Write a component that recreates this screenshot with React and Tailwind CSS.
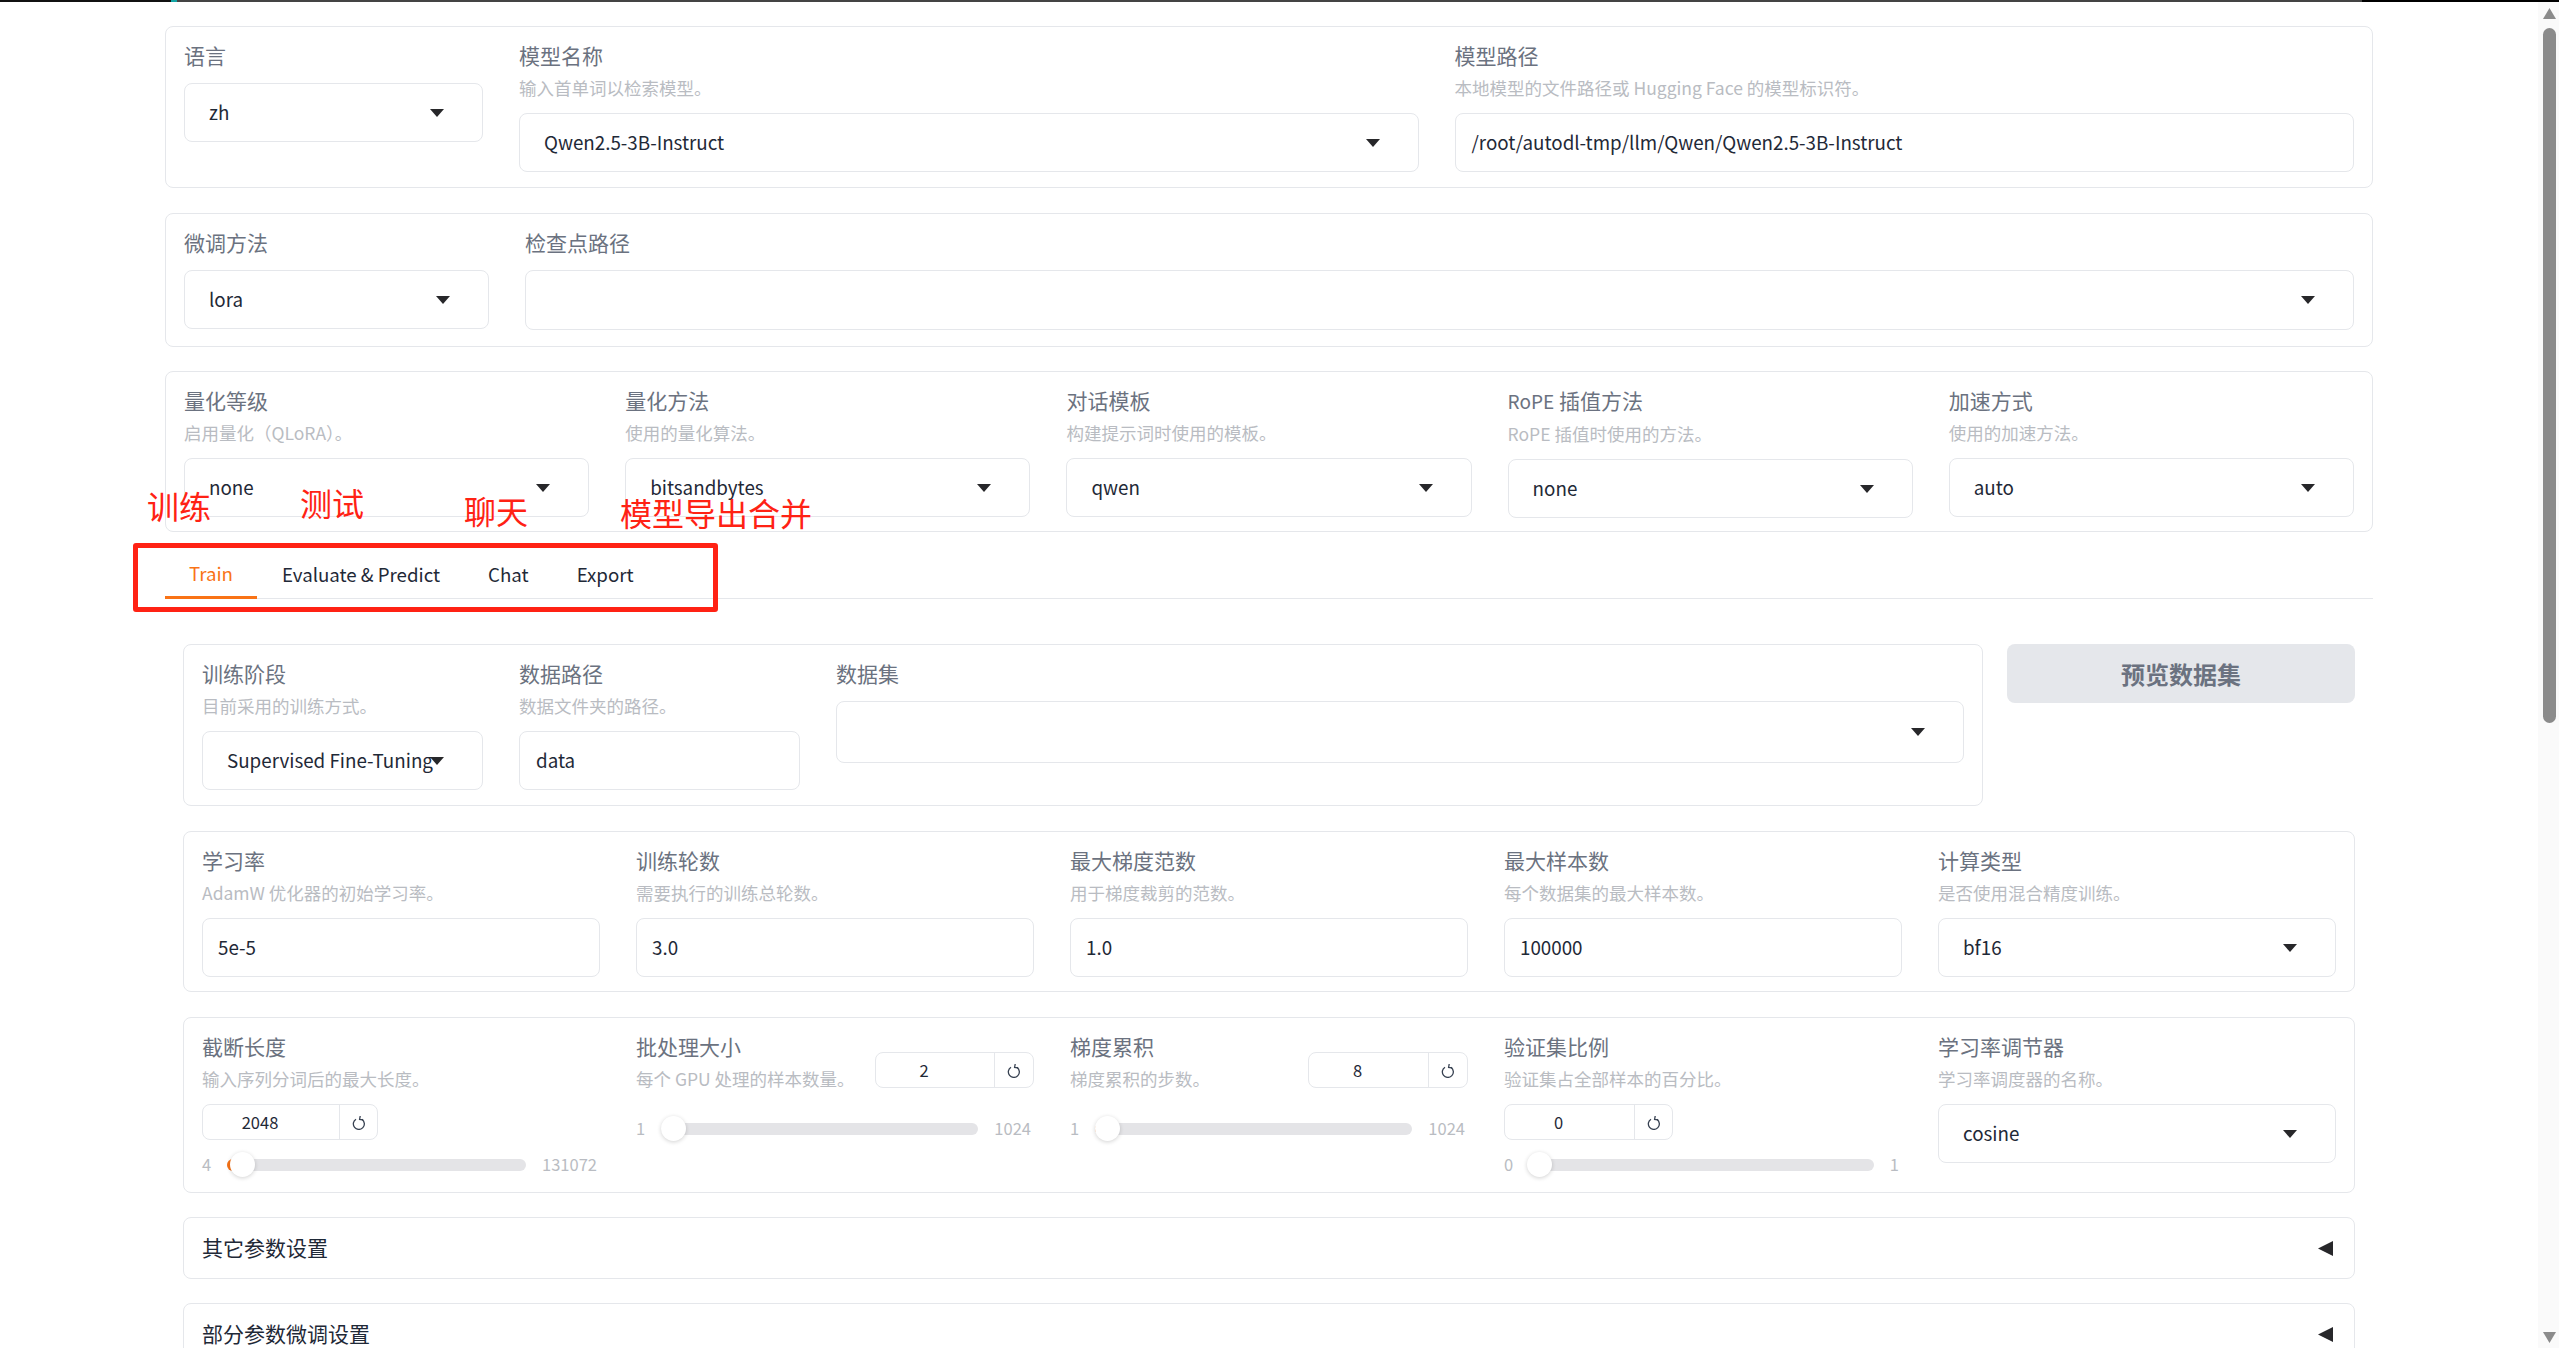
const font = { fontFamily: '"Noto Sans CJK SC", "Noto Sans", "DejaVu Sans", sans-serif' }

function Arrow() {
  return (
    <svg width="14" height="8" viewBox="0 0 14 8" className="shrink-0">
      <polygon points="0,0 14,0 7,8" fill="#27272a" />
    </svg>
  )
}

function ResetIcon() {
  return (
    <svg width="14" height="15" viewBox="0 0 14 15" fill="none" stroke="#374151" strokeWidth="1.3">
      <path d="M4 4.2 A5.5 5.5 0 1 0 10 4.4" />
      <path d="M8.2 1 L7.6 4.4 L11.2 4.8" />
    </svg>
  )
}

function Panel({ className = '', children }) {
  return <div className={`border border-[#e5e7eb] rounded-[8px] bg-white ${className}`}>{children}</div>
}

function Label({ title, info }) {
  return (
    <div className={info ? '' : 'pb-[2px]'}>
      <div className="text-[21px] leading-[20px] text-[#6b7280]">{title}</div>
      {info && <div className="mt-[14px] text-[17.5px] leading-[18px] text-[#b9bcc2] whitespace-nowrap">{info}</div>}
    </div>
  )
}

function Select({ value, h = 'h-[59px]', pl = 'pl-[24px]', pr = 'pr-[38px]' }) {
  return (
    <div className={`mt-[16px] ${h} ${pl} ${pr} border border-[#e5e7eb] rounded-[8px] flex items-center text-[18.8px] text-[#1f2937]`}>
      <span className="flex-1 min-w-0 whitespace-nowrap">{value}</span>
      <Arrow />
    </div>
  )
}

function Input({ value, pl = 'pl-[16px]', h = 'h-[59px]' }) {
  return (
    <div className={`mt-[16px] ${h} ${pl} border border-[#e5e7eb] rounded-[8px] flex items-center text-[18.8px] text-[#1f2937]`}>
      {value}
    </div>
  )
}

function Field({ title, info, children }) {
  return (
    <div className="min-w-0">
      <Label title={title} info={info} />
      {children}
    </div>
  )
}

function NumberBox({ value, w, split }) {
  return (
    <div className={`${w} h-[36px] border border-[#e5e7eb] rounded-[8px] flex shrink-0 text-[16.5px] text-[#1f2937]`}>
      <div className={`${split} pr-[22px] flex items-center justify-center border-r border-[#e5e7eb]`}>{value}</div>
      <div className="flex-1 flex items-center justify-center">
        <ResetIcon />
      </div>
    </div>
  )
}

function Slider({ min, max, pos, fill = 0, className = '' }) {
  return (
    <div className={`flex items-center h-[25px] pr-[3px] text-[16.5px] text-[#b9bcc2] ${className}`}>
      <span>{min}</span>
      <div className="relative flex-1 h-[12px] mx-[16px] bg-[#e4e4e7] rounded-full">
        {fill > 0 && <div className="absolute left-0 top-0 h-full bg-[#f97316] rounded-l-full" style={{ width: fill }} />}
        <div className="absolute top-[-7px] w-[25px] h-[25px] bg-white rounded-full shadow-[0_1px_4px_rgba(0,0,0,0.18)]" style={{ left: pos }} />
      </div>
      <span>{max}</span>
    </div>
  )
}

function Accordion({ title, className = '' }) {
  return (
    <Panel className={`h-[62px] pl-[18px] pr-[21px] flex items-center justify-between shrink-0 ${className}`}>
      <span className="text-[21px] text-[#1f2937]">{title}</span>
      <svg width="15" height="15" viewBox="0 0 15 15">
        <polygon points="15,0 15,15 0,7.5" fill="#27272a" />
      </svg>
    </Panel>
  )
}

export default function App() {
  const tabs = ['Evaluate & Predict', 'Chat', 'Export']

  return (
    <div className="relative w-full h-[1348px] overflow-hidden bg-white flex flex-col" style={font}>
      <div className="h-[2px] shrink-0 flex">
        <div className="w-[171px] bg-[#111111]" />
        <div className="w-[6px] bg-[#14a5a5]" />
        <div className="flex-1 bg-[#444444]" />
        <div className="w-[197px] bg-black" />
      </div>

      <div className="flex-1 flex min-h-0">
        <main className="w-[2208px] ml-[165px] pt-[24px]">
          <Panel className="h-[162px] px-[18px] pt-[18px] grid grid-cols-[299px_1fr_1fr] gap-[36px]">
            <Field title="语言"><Select value="zh" /></Field>
            <Field title="模型名称" info="输入首单词以检索模型。"><Select value="Qwen2.5-3B-Instruct" /></Field>
            <Field title="模型路径" info="本地模型的文件路径或 Hugging Face 的模型标识符。"><Input value="/root/autodl-tmp/llm/Qwen/Qwen2.5-3B-Instruct" /></Field>
          </Panel>

          <Panel className="h-[134px] mt-[25px] px-[18px] pt-[18px] grid grid-cols-[305px_1fr] gap-[36px]">
            <Field title="微调方法"><Select value="lora" /></Field>
            <Field title="检查点路径"><Select value="" h="h-[60px]" /></Field>
          </Panel>

          <Panel className="h-[161px] mt-[24px] px-[18px] pt-[18px] grid grid-cols-5 gap-[36px]">
            <Field title="量化等级" info="启用量化（QLoRA）。"><Select value="none" /></Field>
            <Field title="量化方法" info="使用的量化算法。"><Select value="bitsandbytes" /></Field>
            <Field title="对话模板" info="构建提示词时使用的模板。"><Select value="qwen" /></Field>
            <Field title={<><span className="text-[19px]">RoPE</span> 插值方法</>} info="RoPE 插值时使用的方法。"><Select value="none" /></Field>
            <Field title="加速方式" info="使用的加速方法。"><Select value="auto" /></Field>
          </Panel>

          <div className="h-[67px] flex items-end border-b border-[#e5e7eb] text-[18.7px] text-[#1f2937]">
            <div className="w-[92px] h-[48px] mb-[-1px] flex items-center justify-center border-b-[3px] border-[#f97316] text-[#f97316]">Train</div>
            <div className="h-[48px] flex items-center gap-[48px] pl-[25px]">
              {tabs.map((t) => <span key={t}>{t}</span>)}
            </div>
          </div>

          <div className="px-[18px] pt-[45px]">
            <div className="flex gap-[24px] items-start">
              <Panel className="w-[1800px] h-[162px] px-[18px] pt-[18px] grid grid-cols-[281px_281px_1fr] gap-[36px]">
                <Field title="训练阶段" info="目前采用的训练方式。"><Select value="Supervised Fine-Tuning" /></Field>
                <Field title="数据路径" info="数据文件夹的路径。"><Input value="data" /></Field>
                <Field title="数据集"><Select value="" h="h-[62px]" /></Field>
              </Panel>
              <div className="flex-1 h-[59px] rounded-[8px] bg-[#e5e7eb] flex items-center justify-center text-[24px] font-bold text-[#6b7280]">预览数据集</div>
            </div>

            <Panel className="h-[161px] mt-[25px] px-[18px] pt-[18px] grid grid-cols-5 gap-[36px]">
              <Field title="学习率" info="AdamW 优化器的初始学习率。"><Input value="5e-5" pl="pl-[15px]" /></Field>
              <Field title="训练轮数" info="需要执行的训练总轮数。"><Input value="3.0" pl="pl-[15px]" /></Field>
              <Field title="最大梯度范数" info="用于梯度裁剪的范数。"><Input value="1.0" pl="pl-[15px]" /></Field>
              <Field title="最大样本数" info="每个数据集的最大样本数。"><Input value="100000" pl="pl-[15px]" /></Field>
              <Field title="计算类型" info="是否使用混合精度训练。"><Select value="bf16" /></Field>
            </Panel>

            <Panel className="h-[176px] mt-[25px] px-[18px] pt-[18px] grid grid-cols-5 gap-[36px]">
              <Field title="截断长度" info="输入序列分词后的最大长度。">
                <div className="mt-[16px]"><NumberBox value="2048" w="w-[176px]" split="w-[137px]" /></div>
                <Slider min="4" max="131072" pos={3} fill={12} className="mt-[12px]" />
              </Field>
              <div>
                <div className="flex items-end justify-between">
                  <Label title="批处理大小" info="每个 GPU 处理的样本数量。" />
                  <NumberBox value="2" w="w-[159px]" split="w-[119px]" />
                </div>
                <Slider min="1" max="1024" pos={0} className="mt-[28px]" />
              </div>
              <div>
                <div className="flex items-end justify-between">
                  <Label title="梯度累积" info="梯度累积的步数。" />
                  <NumberBox value="8" w="w-[160px]" split="w-[120px]" />
                </div>
                <Slider min="1" max="1024" pos={0} fill={6} className="mt-[28px]" />
              </div>
              <Field title="验证集比例" info="验证集占全部样本的百分比。">
                <div className="mt-[16px]"><NumberBox value="0" w="w-[169px]" split="w-[130px]" /></div>
                <Slider min="0" max="1" pos={-2} className="mt-[12px]" />
              </Field>
              <Field title="学习率调节器" info="学习率调度器的名称。"><Select value="cosine" /></Field>
            </Panel>

            <Accordion title="其它参数设置" className="mt-[24px]" />
            <Accordion title="部分参数微调设置" className="mt-[24px]" />
          </div>
        </main>

        <aside className="ml-auto w-[21px] bg-[#fafafa] flex flex-col items-center pl-[5px] pr-[3px]">
          <svg width="13" height="11" viewBox="0 0 13 11" className="mt-[6px] shrink-0">
            <polygon points="6.5,0 13,11 0,11" fill="#8b8b8b" />
          </svg>
          <div className="w-[13px] h-[695px] mt-[9px] rounded-full bg-[#8b8b8b]" />
          <svg width="13" height="11" viewBox="0 0 13 11" className="mt-auto mb-[5px] shrink-0">
            <polygon points="0,0 13,0 6.5,11" fill="#8b8b8b" />
          </svg>
        </aside>
      </div>

      {/* red annotations drawn on top of the screenshot */}
      <div className="absolute left-[133px] top-[543px] w-[585px] h-[69px] border-[5px] border-[#ff2214] rounded-[3px]" />
      <span className="absolute left-[147px] top-[481px] text-[32px] leading-[48px] text-[#ff2214]">训练</span>
      <span className="absolute left-[300px] top-[478px] text-[32px] leading-[48px] text-[#ff2214]">测试</span>
      <span className="absolute left-[464px] top-[486px] text-[32px] leading-[48px] text-[#ff2214]">聊天</span>
      <span className="absolute left-[620px] top-[488px] text-[32px] leading-[48px] text-[#ff2214]">模型导出合并</span>
    </div>
  )
}
